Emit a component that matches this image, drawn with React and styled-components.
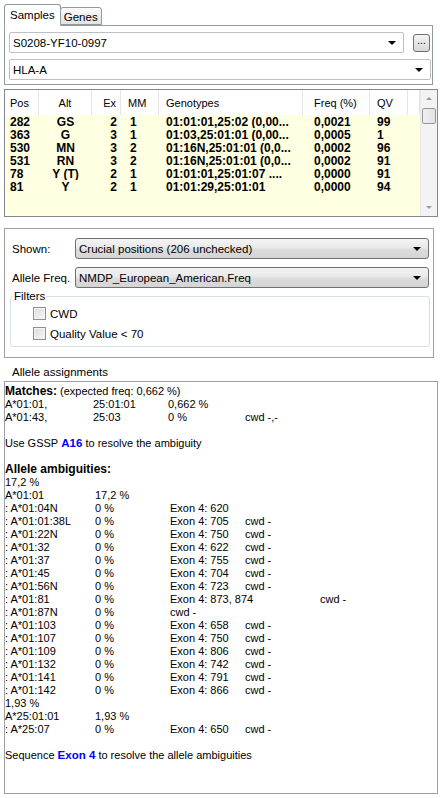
import React from 'react';
import styled, { createGlobalStyle, css } from 'styled-components';

const GlobalStyle = createGlobalStyle`
	html, body {
		margin: 0;
		padding: 0;
		background: #fff;
	}
	body {
		font-family: "Liberation Sans", Arial, sans-serif;
		font-size: 11px;
		color: #000;
	}
	* {
		box-sizing: border-box;
	}
`;

const Page = styled.div`
	width: 440px;
	height: 798px;
	overflow: hidden;
	padding: 4px 0 0 4px;
	display: flex;
	flex-direction: column;
`;

/* ---------- tabs ---------- */

const TabStrip = styled.div`
	display: flex;
	align-items: flex-end;
	height: 21px;
	position: relative;
	z-index: 1;
`;

const Tab = styled.div`
	display: flex;
	align-items: center;
	font-size: 11.5px;
	white-space: nowrap;
	border: 1px solid #919b9c;
	border-radius: 3px 3px 0 0;
	${p =>
		p.$active
			? css`
					height: 22px;
					margin-bottom: -1px;
					padding: 0 5px 0 5px;
					background: #fff;
					border-bottom-color: #fff;
			  `
			: css`
					height: 18px;
					margin-left: -1px;
					padding: 2px 3px 0 3px;
					background: linear-gradient(#fbfbfb, #e2e2e2);
			  `}
`;

const TabPanel = styled.div`
	width: 429px;
	height: 60px;
	border: 1px solid #919b9c;
	padding: 6px 0 0 4px;
	display: flex;
	flex-direction: column;
	gap: 6px;
`;

const Row = styled.div`
	display: flex;
	align-items: center;
	gap: ${p => p.$gap || 0}px;
`;

/* ---------- combos ---------- */

const Combo = styled.div`
	position: relative;
	width: ${p => p.$w}px;
	height: 21px;
	display: flex;
	align-items: center;
	padding-left: 3px;
	white-space: nowrap;
	overflow: hidden;
	font-size: 11.5px;
	border: 1px solid #c0c0c0;
	border-radius: 2px;
	background: #fff;
	${p =>
		p.$raised &&
		css`
			border-color: #707070;
			border-radius: 3px;
			background: linear-gradient(#f4f4f4, #e8e8e8 48%, #dddddd 52%, #d4d4d4);
		`}
`;

const Arrow = styled.span`
	position: absolute;
	right: 7px;
	top: 8px;
	width: 0;
	height: 0;
	border-left: 4px solid transparent;
	border-right: 4px solid transparent;
	border-top: 4px solid #000;
`;

const DotsButton = styled.div`
	width: 17px;
	height: 18px;
	border: 1px solid #707070;
	border-radius: 3px;
	background: linear-gradient(#f4f4f4, #e6e6e6 50%, #d8d8d8);
	font-size: 10px;
	line-height: 12px;
	text-align: center;
	color: #000;
`;

/* ---------- grid (list view) ---------- */

const COLS = '34px 53px 29px 38px 144px 67px 38px 12px';

const Table = styled.div`
	margin-top: 4px;
	width: 434px;
	height: 128px;
	border: 1px solid #828790;
	display: flex;
	background: #ffffe1;
`;

const TableBody = styled.div`
	width: 415px;
	display: flex;
	flex-direction: column;
`;

const HeadRow = styled.div`
	display: grid;
	grid-template-columns: ${COLS};
	height: 25px;
	background: #fff;
`;

const HeadCell = styled.div`
	display: flex;
	align-items: center;
	justify-content: ${p => p.$justify || 'flex-start'};
	padding-left: ${p => p.$pl || 0}px;
	padding-right: ${p => p.$pr || 0}px;
	border-right: 1px solid #e5e5e5;
	font-size: 11px;
	color: #000;
`;

const DataRow = styled.div`
	display: grid;
	grid-template-columns: ${COLS};
	height: 13px;
	line-height: 14px;
	font-size: 12px;
	font-weight: bold;
`;

const DataCell = styled.div`
	text-align: ${p => p.$align || 'left'};
	padding-left: ${p => p.$pl || 0}px;
	padding-right: ${p => p.$pr || 0}px;
	white-space: nowrap;
	overflow: hidden;
`;

const ScrollBar = styled.div`
	width: 17px;
	display: flex;
	flex-direction: column;
	background: #f3f3f3;
	border-left: 1px solid #e8e8e8;
`;

const ScrollButton = styled.div`
	height: 17px;
	display: flex;
	align-items: center;
	justify-content: center;
	background: #f3f3f3;
`;

const ScrollArrow = styled.span`
	width: 0;
	height: 0;
	border-left: 3px solid transparent;
	border-right: 3px solid transparent;
	${p => (p.$up ? 'border-bottom: 3px solid #9a9a9a;' : 'border-top: 3px solid #9a9a9a;')}
`;

const Thumb = styled.div`
	margin: 1px 1px 0 1px;
	height: 16px;
	border: 1px solid #979797;
	border-radius: 2px;
	background: linear-gradient(90deg, #f0f0f0, #e2e2e2);
`;

const Track = styled.div`
	flex: 1;
`;

/* ---------- options group ---------- */

const GroupBox = styled.div`
	margin-top: 11px;
	width: 430px;
	height: 130px;
	border: 1px solid #a0a0a0;
	padding: 9px 0 0 0;
	display: flex;
	flex-direction: column;
	gap: 8px;
`;

const FieldLabel = styled.div`
	width: 70px;
	padding-left: 7px;
	font-size: 11.5px;
`;

const Fieldset = styled.fieldset`
	margin: -6px 0 0 5px;
	width: 420px;
	height: 57px;
	padding: 5px 0 0 2px;
	border: 1px solid #d5dfe5;
	border-radius: 3px;
	display: flex;
	flex-direction: column;
	gap: 7px;
`;

const Legend = styled.legend`
	padding: 0 1px;
	margin: 0;
	font-size: 11.5px;
`;

const CheckRow = styled.label`
	display: flex;
	align-items: center;
	gap: 4px;
	margin-left: 20px;
	font-size: 11.5px;
	height: 13px;
`;

const Box = styled.span`
	width: 13px;
	height: 13px;
	border: 1px solid #8f8f8f;
	background: linear-gradient(135deg, #dcdcdc, #f7f7f7);
	box-shadow: inset 0 0 0 1px #f4f4f4;
`;

const SectionLabel = styled.div`
	height: 23px;
	padding: 8px 0 0 8px;
	line-height: 13px;
	font-size: 11.5px;
`;

/* ---------- result text ---------- */

const TextBox = styled.div`
	width: 434px;
	height: 413px;
	border: 1px solid #a0a0a0;
	padding: 3px 0 0 0;
	background: #fff;
`;

const Line = styled.div`
	display: flex;
	height: 13px;
	line-height: 13px;
	white-space: nowrap;
`;

const Col = styled.span`
	display: inline-block;
	width: ${p => p.$w}px;
	flex: none;
`;

const Strong = styled.b`
	font-weight: bold;
	font-size: ${p => p.$size || 11}px;
`;

const Hint = styled.b`
	font-weight: bold;
	color: #0000ff;
	font-size: 11.5px;
`;

const rows = [
	['282', 'GS', '2', '1', '01:01:01,25:02 (0,00...', '0,0021', '99'],
	['363', 'G', '3', '1', '01:03,25:01:01 (0,00...', '0,0005', '1'],
	['530', 'MN', '3', '2', '01:16N,25:01:01 (0,0...', '0,0002', '96'],
	['531', 'RN', '3', '2', '01:16N,25:01:01 (0,0...', '0,0002', '91'],
	['78', 'Y (T)', '2', '1', '01:01:01,25:01:07 ....', '0,0000', '91'],
	['81', 'Y', '2', '1', '01:01:29,25:01:01', '0,0000', '94'],
];

const matches = [
	['A*01:01,', '25:01:01', '0,662 %', ''],
	['A*01:43,', '25:03', '0 %', 'cwd -,-'],
];

const ambiguities = [
	['17,2 %'],
	['A*01:01', '17,2 %'],
	[': A*01:04N', '0 %', 'Exon 4: 620'],
	[': A*01:01:38L', '0 %', 'Exon 4: 705', 'cwd -'],
	[': A*01:22N', '0 %', 'Exon 4: 750', 'cwd -'],
	[': A*01:32', '0 %', 'Exon 4: 622', 'cwd -'],
	[': A*01:37', '0 %', 'Exon 4: 755', 'cwd -'],
	[': A*01:45', '0 %', 'Exon 4: 704', 'cwd -'],
	[': A*01:56N', '0 %', 'Exon 4: 723', 'cwd -'],
	[': A*01:81', '0 %', 'Exon 4: 873, 874', 'cwd -'],
	[': A*01:87N', '0 %', 'cwd -'],
	[': A*01:103', '0 %', 'Exon 4: 658', 'cwd -'],
	[': A*01:107', '0 %', 'Exon 4: 750', 'cwd -'],
	[': A*01:109', '0 %', 'Exon 4: 806', 'cwd -'],
	[': A*01:132', '0 %', 'Exon 4: 742', 'cwd -'],
	[': A*01:141', '0 %', 'Exon 4: 791', 'cwd -'],
	[': A*01:142', '0 %', 'Exon 4: 866', 'cwd -'],
	['1,93 %'],
	['A*25:01:01', '1,93 %'],
	[': A*25:07', '0 %', 'Exon 4: 650', 'cwd -'],
];

// tab stops: a field that runs past the next stop jumps one stop further
function TabbedLine({ cells, widths }) {
	return (
		<Line>
			{cells.map((c, i) => {
				let w = widths[i];
				if (i === 2 && c.length > 12) w = 150;
				return (
					<Col key={i} $w={i === cells.length - 1 ? 200 : w}>
						{c}
					</Col>
				);
			})}
		</Line>
	);
}

function App() {
	return (
		<Page>
			<GlobalStyle />
			<TabStrip>
				<Tab $active>Samples</Tab>
				<Tab>Genes</Tab>
			</TabStrip>
			<TabPanel>
				<Row $gap={9}>
					<Combo $w={395}>
						S0208-YF10-0997
						<Arrow />
					</Combo>
					<DotsButton>...</DotsButton>
				</Row>
				<Combo $w={422}>
					HLA-A
					<Arrow />
				</Combo>
			</TabPanel>

			<Table>
				<TableBody>
					<HeadRow>
						<HeadCell $pl={5}>Pos</HeadCell>
						<HeadCell $justify="center">Alt</HeadCell>
						<HeadCell $justify="flex-end" $pr={4}>Ex</HeadCell>
						<HeadCell $pl={7}>MM</HeadCell>
						<HeadCell $pl={7}>Genotypes</HeadCell>
						<HeadCell $pl={11}>Freq (%)</HeadCell>
						<HeadCell $pl={7}>QV</HeadCell>
						<HeadCell />
					</HeadRow>
					{rows.map(r => (
						<DataRow key={r[0]}>
							<DataCell $pl={5}>{r[0]}</DataCell>
							<DataCell $align="center">{r[1]}</DataCell>
							<DataCell $align="right" $pr={4}>{r[2]}</DataCell>
							<DataCell $pl={9}>{r[3]}</DataCell>
							<DataCell $pl={7}>{r[4]}</DataCell>
							<DataCell $pl={11}>{r[5]}</DataCell>
							<DataCell $pl={7}>{r[6]}</DataCell>
							<DataCell />
						</DataRow>
					))}
				</TableBody>
				<ScrollBar>
					<ScrollButton>
						<ScrollArrow $up />
					</ScrollButton>
					<Thumb />
					<Track />
					<ScrollButton>
						<ScrollArrow />
					</ScrollButton>
				</ScrollBar>
			</Table>

			<GroupBox>
				<Row>
					<FieldLabel>Shown:</FieldLabel>
					<Combo $w={354} $raised>
						Crucial positions (206 unchecked)
						<Arrow />
					</Combo>
				</Row>
				<Row>
					<FieldLabel>Allele Freq.</FieldLabel>
					<Combo $w={354} $raised>
						NMDP_European_American.Freq
						<Arrow />
					</Combo>
				</Row>
				<Fieldset>
					<Legend>Filters</Legend>
					<CheckRow>
						<Box />
						CWD
					</CheckRow>
					<CheckRow>
						<Box />
						Quality Value &lt; 70
					</CheckRow>
				</Fieldset>
			</GroupBox>

			<SectionLabel>Allele assignments</SectionLabel>
			<TextBox>
				<Line>
					<Strong $size={12}>Matches:</Strong>&nbsp;(expected freq: 0,662 %)
				</Line>
				{matches.map(m => (
					<TabbedLine key={m[0]} cells={m} widths={[88, 75, 77]} />
				))}
				<Line />
				<Line>
					Use GSSP&nbsp;<Hint>A16</Hint>&nbsp;to resolve the ambiguity
				</Line>
				<Line />
				<Line>
					<Strong $size={12}>Allele ambiguities:</Strong>
				</Line>
				{ambiguities.map((a, i) => (
					<TabbedLine key={i} cells={a} widths={[90, 75, 75]} />
				))}
				<Line />
				<Line>
					Sequence&nbsp;<Hint>Exon 4</Hint>&nbsp;to resolve the allele ambiguities
				</Line>
			</TextBox>
		</Page>
	);
}

export default App;
